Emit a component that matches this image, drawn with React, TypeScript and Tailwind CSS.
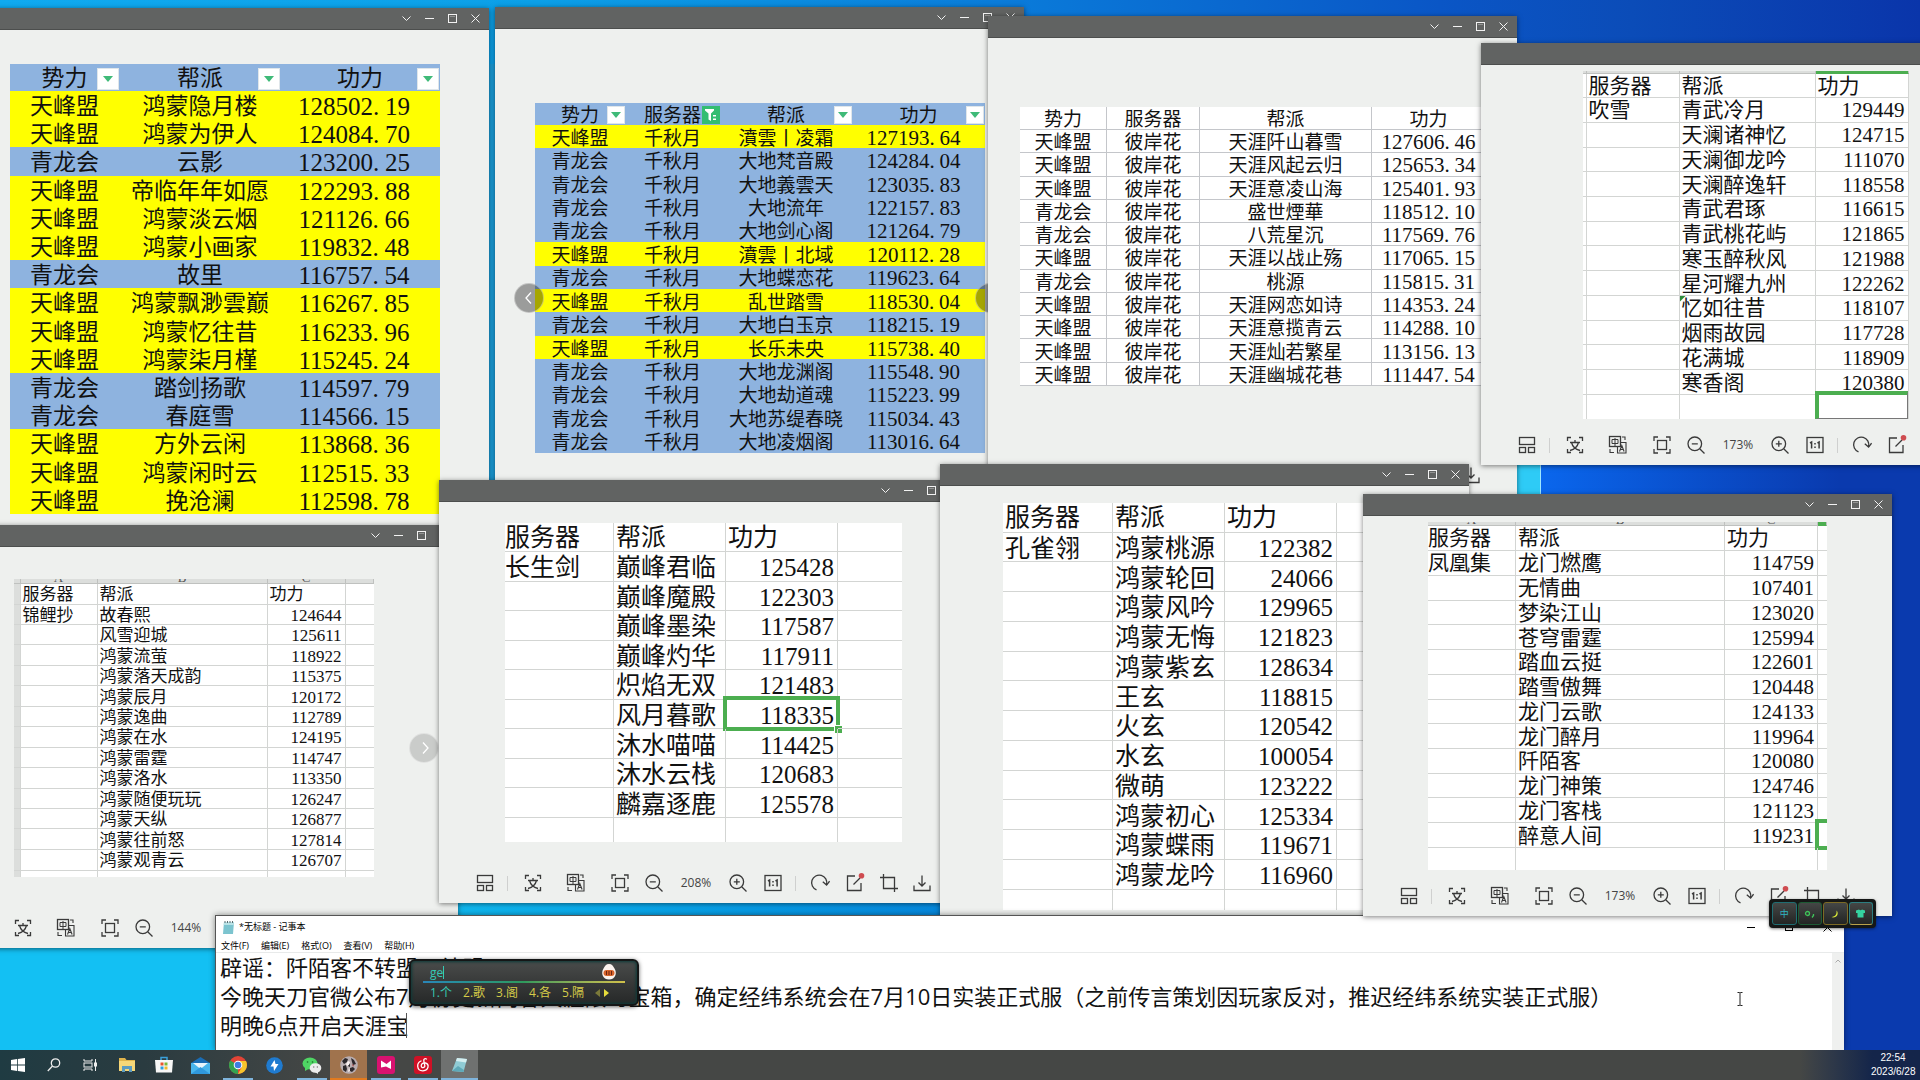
import React from "react";

type Column = {
  label: string;
  width: string;
  filter?: "arrow" | "funnel";
};

const SHEET_FONT = "font-['Liberation_Serif','Noto_Sans_CJK_SC',serif]";
const UI_FONT = "font-['Open_Sans','Noto_Sans_CJK_SC',sans-serif]";

/* ---------- viewer window chrome ---------- */

function TitleBar() {
  return (
    <div className="flex h-[22px] shrink-0 items-center justify-end border-b border-[#4c4e4d] bg-[#616362] pr-0.5 text-[#f2f2f2]">
      <button aria-label="More" className="flex w-[23px] justify-center">
        <svg width="11" height="11" viewBox="0 0 11 11" fill="none" stroke="currentColor">
          <path d="M1.5 3.5 5.5 7.5 9.5 3.5" />
        </svg>
      </button>
      <button aria-label="Minimize" className="flex w-[23px] justify-center">
        <svg width="11" height="11" viewBox="0 0 11 11" fill="none" stroke="currentColor">
          <path d="M1 5.5H10" />
        </svg>
      </button>
      <button aria-label="Maximize" className="flex w-[23px] justify-center">
        <svg width="11" height="11" viewBox="0 0 11 11" fill="none" stroke="currentColor">
          <rect x="1.5" y="1.5" width="8" height="8" />
          <path d="M3 3.5H8" opacity=".35" />
        </svg>
      </button>
      <button aria-label="Close" className="flex w-[23px] justify-center">
        <svg width="11" height="11" viewBox="0 0 11 11" fill="none" stroke="currentColor">
          <path d="M1.5 1.5 9.5 9.5M9.5 1.5 1.5 9.5" />
        </svg>
      </button>
    </div>
  );
}

function Tool({ label, width, children }: { label: string; width: string; children: React.ReactNode }) {
  return (
    <button aria-label={label} className={`flex shrink-0 justify-center ${width}`}>
      <svg width="20" height="20" viewBox="0 0 20 20" fill="none" stroke="currentColor" strokeWidth="1.3">
        {children}
      </svg>
    </button>
  );
}

function Toolbar({ zoom }: { zoom: string }) {
  return (
    <div className="flex h-10 shrink-0 items-center pl-7 text-[#3a3a3a]">
      <Tool label="Gallery" width="w-9">
        <rect x="2.5" y="2.5" width="15" height="7" />
        <rect x="2.5" y="12.5" width="6" height="5" />
        <rect x="11.5" y="12.5" width="6" height="5" />
      </Tool>
      <span className="mx-1 h-[15px] w-0.5 shrink-0 border-l border-[#cfd0cf]" />
      <Tool label="Recognize text" width="w-10">
        <path d="M2.5 6V2.5H6M14 2.5h3.5V6M17.500 14v3.500H14M6 17.500H2.500V14" />
        <path d="M5 7.500h10M10 5v2.500M13.500 7.500C12.500 11.500 9 14.500 5 15.500M6.500 7.500C7.500 11.500 11 14.500 15 15.500" />
      </Tool>
      <Tool label="Translate" width="w-[46px]">
        <rect x="1.500" y="1.500" width="11" height="10" />
        <path d="M4 4.500h6v4H4zM7 3v8" strokeWidth="1" />
        <path d="M9.500 11.500v6.500h8.500V7.500h-5.500M11.500 16.500l2.300-6 2.300 6M12.300 14.500h3M14 2h3v3M2 14v3.500h4" strokeWidth="1.1" />
      </Tool>
      <Tool label="Fit to window" width="w-[42px]">
        <path d="M2 6V2h4M14 2h4v4M18 14v4h-4M6 18H2v-4" />
        <rect x="5.500" y="5.500" width="9" height="9" />
      </Tool>
      <Tool label="Zoom out" width="w-[26px]">
        <circle cx="8.800" cy="8.800" r="6.800" />
        <path d="M13.700 13.700 18.500 18.500M5.800 8.800h6" />
      </Tool>
      <span className={`w-[58px] shrink-0 text-center text-xs text-[#444] ${UI_FONT}`}>{zoom}</span>
      <Tool label="Zoom in" width="w-[26px]">
        <circle cx="8.800" cy="8.800" r="6.800" />
        <path d="M13.700 13.700 18.500 18.500M5.800 8.800h6M8.800 5.800v6" />
      </Tool>
      <Tool label="Actual size" width="w-11">
        <rect x="2" y="2.500" width="16" height="15" />
        <path d="M5 8l1.600-1V13.500M12.500 8l1.600-1V13.500" strokeWidth="1.5" />
        <path d="M10 8v1.500M10 11.500v1.500" strokeWidth="1.5" />
      </Tool>
      <span className="h-[15px] w-0.5 shrink-0 border-l border-[#cfd0cf]" />
      <Tool label="Rotate" width="w-[46px]">
        <path d="M6.500 16.800A7.600 7.600 0 1 1 16.600 11.500" />
        <path d="M12.800 8.800 16.600 12 19.600 8.200" />
      </Tool>
      <Tool label="Edit" width="w-6">
        <path d="M10 3H2.500v14.500H16V10M8.500 11.500 15 5" />
        <circle cx="16.500" cy="2.800" r="2.800" fill="#cf4c50" stroke="none" />
      </Tool>
      <Tool label="Crop" width="w-11">
        <path d="M1 4.500h14.500V19M4.500 1v14.500H19" />
      </Tool>
      <Tool label="Save" width="w-[22px]">
        <path d="M10 2.500v10M6.500 9.500l3.500 3.500 3.500-3.500M2 12.500v5h16v-5" />
      </Tool>
    </div>
  );
}

function ImageWindow({ place, zoom, nav, children }: {
  place: string;
  zoom?: string;
  nav?: string;
  children: React.ReactNode;
}) {
  return (
    <section className={`absolute flex w-[529px] flex-col bg-[#eef0ee] shadow-[0_1px_5px_rgba(0,0,0,0.5)] ${place}`}>
      <TitleBar />
      <div className="flex min-h-0 flex-1 flex-col items-center justify-center">{children}</div>
      {zoom ? <Toolbar zoom={zoom} /> : <div className="h-10 shrink-0" />}
      {nav && (
        <div className="pointer-events-none absolute inset-x-[19px] top-[22px] bottom-0 flex items-center justify-between">
          <button aria-label="Previous" className={`flex size-[30px] items-center justify-center rounded-full border border-white/40 text-white ${nav}`}>
            <svg width="14" height="14" viewBox="0 0 14 14" fill="none" stroke="currentColor" strokeWidth="1.3">
              <path d="M9 1.500 4 7l5 5.500" />
            </svg>
          </button>
          <button aria-label="Next" className={`flex size-[30px] items-center justify-center rounded-full border border-white/40 text-white ${nav}`}>
            <svg width="14" height="14" viewBox="0 0 14 14" fill="none" stroke="currentColor" strokeWidth="1.300">
              <path d="M6 1.500 11 7l-5 5.500" />
            </svg>
          </button>
        </div>
      )}
    </section>
  );
}

/* ---------- coloured ranking tables ---------- */

function Decimal({ value, dot }: { value: string; dot: string }) {
  const [whole, part] = value.split(".");
  return (
    <>
      {whole}
      <span className={`inline-block text-left ${dot}`}>.</span>
      {part}
    </>
  );
}

function FilterButton({ kind, size, label }: { kind: "arrow" | "funnel"; size: string; label: string }) {
  return kind === "arrow" ? (
    <button aria-label={`${label} filter`} className={`absolute right-px bottom-px flex items-center justify-center border border-[#dfe6ea] bg-white ${size}`}>
      <svg width="10" height="6" viewBox="0 0 10 6">
        <path d="M0 0h10L5 6z" fill="#3fba78" />
      </svg>
    </button>
  ) : (
    <button aria-label={`${label} filter`} className={`absolute right-0 bottom-px flex items-center justify-center bg-[#33bd72] ${size}`}>
      <svg width="14" height="14" viewBox="0 0 14 14" fill="#fff">
        <path d="M1 1h9v1.500L7 5.500V13L4.500 11.500v-6L1 2.500zM9 7h3v1.500H9zM9 10.500h3V12H9z" />
      </svg>
    </button>
  );
}

function RankTable({ columns, rows, size, head, filter, dot, plain, pad, numbers }: {
  columns: Column[];
  rows: string[][];
  size: string;
  head: string;
  filter: string;
  dot: string;
  plain?: boolean;
  pad: string;
  numbers: string;
}) {
  const cell = plain ? "border-r border-b border-[#c4c6ca] last:border-r-0" : "";
  return (
    <table className={`table-fixed border-separate border-spacing-0 text-center leading-none text-[#111] ${SHEET_FONT} ${size}`}>
      <colgroup>
        {columns.map((c) => <col key={c.label} className={c.width} />)}
      </colgroup>
      <thead>
        <tr className={`${head} ${plain ? "bg-white" : "bg-[#8eb3df]"}`}>
          {columns.map((c) => (
            <th key={c.label} scope="col" className={`relative px-0 pt-0.5 pb-0 font-normal ${cell}`}>
              {c.label}
              {c.filter && <FilterButton kind={c.filter} size={filter} label={c.label} />}
            </th>
          ))}
        </tr>
      </thead>
      <tbody>
        {rows.map((r) => (
          <tr key={r[r.length - 2]} className={plain ? "bg-white" : r[0] === "天峰盟" ? "bg-[#ffff00]" : "bg-[#8eb3df]"}>
            {r.map((v, i) => (
              <td key={i} className={`whitespace-nowrap pb-0 pl-0 ${pad} ${cell} ${i === r.length - 1 ? numbers : "pr-0"}`}>
                {i === r.length - 1 ? <Decimal value={v} dot={dot} /> : v}
              </td>
            ))}
          </tr>
        ))}
      </tbody>
    </table>
  );
}

/* ---------- plain server sheets ---------- */

function ServerSheet({ server, rows, size, cols, head, pad, tail, strip, letters, gutter, cut, select, extra, mark, topMark }: {
  server: string;
  rows: [string, string][];
  size: string;
  cols: string[];
  head: string;
  pad: string;
  tail?: string;
  strip?: string;
  letters?: string[];
  gutter?: string;
  cut?: boolean;
  select?: string;
  extra?: boolean;
  mark?: string;
  topMark?: number;
}) {
  const line = "border-r border-b border-[#d3d5d3]";
  const first = cut ? "pl-0" : "pl-0.5";
  const side = gutter ? <td className={`p-0 ${line} ${gutter}`} /> : null;
  const green = "pointer-events-none absolute border-4 border-[#4cae50]";
  return (
    <table className={`table-fixed border-separate border-spacing-0 bg-white text-left leading-none text-[#111] ${SHEET_FONT} ${size}`}>
      <colgroup>
        {cols.map((c, i) => <col key={i} className={c} />)}
      </colgroup>
      <tbody>
        {strip && (
          <tr>
            {cols.map((_, i) => (
              <td key={i} className={`border-r border-b bg-[#dcdedc] p-0 ${i === topMark ? "border-r-[#bfc1bf] border-b-[#4cae50]" : "border-[#bfc1bf]"}`}>
                <div className={`flex items-end justify-center overflow-hidden text-[13px] leading-[10px] text-[#555] ${strip} ${i === topMark ? "bg-[#4cae50]" : ""}`}>
                  {letters?.[i]}
                </div>
              </td>
            ))}
          </tr>
        )}
        <tr className={head}>
          {side}
          <td className={`pt-px pr-0 pb-0 ${first} ${line}`}>服务器</td>
          <td className={`pt-px pr-0 pb-0 pl-0.5 ${line}`}>帮派</td>
          <td className={`pt-px pr-0 pb-0 pl-0.5 ${line}`}>功力</td>
          {extra && <td className="border-b border-[#d3d5d3] p-0" />}
        </tr>
        {rows.map(([name, power], i) => (
          <tr key={name}>
            {side}
            <td className={`whitespace-nowrap pr-0 pb-0 ${pad} ${first} ${line}`}>{i === 0 ? server : ""}</td>
            <td className={`relative whitespace-nowrap pr-0 pb-0 pl-0.5 ${pad} ${line}`}>
              {mark === name && <span className="absolute top-0 left-0 size-1.5 bg-[#2e8b3a] [clip-path:polygon(0_0,100%_0,0_100%)]" />}
              {name}
            </td>
            <td className={`relative pr-[3px] pb-0 pl-0 text-right ${pad} ${line}`}>
              {power}
              {select === name && (
                <span className={`${green} -inset-x-[3px] -top-1 -bottom-[3px]`}>
                  <span className="absolute -right-[6px] -bottom-[6px] size-2 border-t border-l border-white bg-[#4cae50]" />
                </span>
              )}
            </td>
            {extra && (
              <td className="relative border-b border-[#d3d5d3] p-0">
                {select === "edge" && i === rows.length - 1 && <span className={`${green} -top-1 right-0 -bottom-[3px] -left-[3px] border-r-0`} />}
              </td>
            )}
          </tr>
        ))}
        {tail && (
          <tr className={tail}>
            {gutter && <td className={`border-r border-[#d3d5d3] p-0 ${gutter}`} />}
            <td className="border-r border-[#d3d5d3] p-0" />
            <td className="border-r border-[#d3d5d3] p-0" />
            <td className="relative border-r border-[#d3d5d3] p-0">
              {select === "tail" && <span className="pointer-events-none absolute -top-1 right-0 bottom-0 -left-px border-t-4 border-r border-b border-l-4 border-[#4cae50] border-r-[#777] border-b-[#777]" />}
            </td>
            {extra && <td className="p-0" />}
          </tr>
        )}
      </tbody>
    </table>
  );
}

/* ---------- data ---------- */

const T = "天峰盟";
const Q = "青龙会";

const hongmeng: string[][] = [
  [T, "鸿蒙隐月楼", "128502.19"], [T, "鸿蒙为伊人", "124084.70"], [Q, "云影", "123200.25"],
  [T, "帝临年年如愿", "122293.88"], [T, "鸿蒙淡云烟", "121126.66"], [T, "鸿蒙小画家", "119832.48"],
  [Q, "故里", "116757.54"], [T, "鸿蒙飘渺雲巅", "116267.85"], [T, "鸿蒙忆往昔", "116233.96"],
  [T, "鸿蒙柒月槿", "115245.24"], [Q, "踏剑扬歌", "114597.79"], [Q, "春庭雪", "114566.15"],
  [T, "方外云闲", "113868.36"], [T, "鸿蒙闲时云", "112515.33"], [T, "挽沧澜", "112598.78"],
];

const S = "千秋月";
const qianqiu: string[][] = [
  [T, S, "濆雲丨凌霜", "127193.64"], [Q, S, "大地梵音殿", "124284.04"], [Q, S, "大地義雲天", "123035.83"],
  [Q, S, "大地流年", "122157.83"], [Q, S, "大地剑心阁", "121264.79"], [T, S, "濆雲丨北域", "120112.28"],
  [Q, S, "大地蝶恋花", "119623.64"], [T, S, "乱世踏雪", "118530.04"], [Q, S, "大地白玉京", "118215.19"],
  [T, S, "长乐未央", "115738.40"], [Q, S, "大地龙渊阁", "115548.90"], [Q, S, "大地劫道魂", "115223.99"],
  [Q, S, "大地苏缇春晓", "115034.43"], [Q, S, "大地凌烟阁", "113016.64"],
];

const B = "彼岸花";
const bian: string[][] = [
  [T, B, "天涯阡山暮雪", "127606.46"], [T, B, "天涯风起云归", "125653.34"], [T, B, "天涯意凌山海", "125401.93"],
  [Q, B, "盛世煙華", "118512.10"], [Q, B, "八荒星沉", "117569.76"], [T, B, "天涯以战止殇", "117065.15"],
  [Q, B, "桃源", "115815.31"], [T, B, "天涯网恋如诗", "114353.24"], [T, B, "天涯意揽青云", "114288.10"],
  [T, B, "天涯灿若繁星", "113156.13"], [T, B, "天涯幽城花巷", "111447.54"],
];

const chuixue: [string, string][] = [
  ["青武冷月", "129449"], ["天澜诸神忆", "124715"], ["天澜御龙吟", "111070"], ["天澜醉逸轩", "118558"],
  ["青武君琢", "116615"], ["青武桃花屿", "121865"], ["寒玉醉秋风", "121988"], ["星河耀九州", "122262"],
  ["忆如往昔", "118107"], ["烟雨故园", "117728"], ["花满城", "118909"], ["寒香阁", "120380"],
];

const jinli: [string, string][] = [
  ["故春熙", "124644"], ["风雪迎城", "125611"], ["鸿蒙流萤", "118922"], ["鸿蒙落天成韵", "115375"],
  ["鸿蒙辰月", "120172"], ["鸿蒙逸曲", "112789"], ["鸿蒙在水", "124195"], ["鸿蒙雷霆", "114747"],
  ["鸿蒙洛水", "113350"], ["鸿蒙随便玩玩", "126247"], ["鸿蒙天纵", "126877"], ["鸿蒙往前怒", "127814"],
  ["鸿蒙观青云", "126707"],
];

const changsheng: [string, string][] = [
  ["巅峰君临", "125428"], ["巅峰魔殿", "122303"], ["巅峰墨染", "117587"], ["巅峰灼华", "117911"],
  ["炽焰无双", "121483"], ["风月暮歌", "118335"], ["沐水喵喵", "114425"], ["沐水云栈", "120683"],
  ["麟嘉逐鹿", "125578"],
];

const kongque: [string, string][] = [
  ["鸿蒙桃源", "122382"], ["鸿蒙轮回", "24066"], ["鸿蒙风吟", "129965"], ["鸿蒙无悔", "121823"],
  ["鸿蒙紫玄", "128634"], ["王玄", "118815"], ["火玄", "120542"], ["水玄", "100054"],
  ["微萌", "123222"], ["鸿蒙初心", "125334"], ["鸿蒙蝶雨", "119671"], ["鸿蒙龙吟", "116960"],
];

const fenghuang: [string, string][] = [
  ["龙门燃鹰", "114759"], ["无情曲", "107401"], ["梦染江山", "123020"], ["苍穹雷霆", "125994"],
  ["踏血云挺", "122601"], ["踏雪傲舞", "120448"], ["龙门云歌", "124133"], ["龙门醉月", "119964"],
  ["阡陌客", "120080"], ["龙门神策", "124746"], ["龙门客栈", "121123"], ["醉意人间", "119231"],
];

const note = [
  "辟谣：阡陌客不转盟，结盟",
  "今晚天刀官微公布7月份更新内容天涯限时宝箱，确定经纬系统会在7月10日实装正式服（之前传言策划因玩家反对，推迟经纬系统实装正式服）",
  "明晚6点开启天涯宝",
].join("\n");

/* ---------- notepad and input method ---------- */

function NotepadIcon() {
  return (
    <svg width="13" height="15" viewBox="0 0 13 15">
      <path d="M2 2h10l-1 12H1z" fill="#7cc4cf" />
      <path d="M2 2h10l-.3 3H1.700z" fill="#b9e2e6" />
      <path d="M3 1v2M5.500 1v2M8 1v2M10.500 1v2" stroke="#5a6c70" />
    </svg>
  );
}

function Notepad() {
  return (
    <section className={`absolute top-[915px] right-[76px] bottom-0 left-[215px] flex flex-col border-t border-l border-[#555] bg-white shadow-[0_0_6px_rgba(0,0,0,0.45)] ${UI_FONT}`}>
      <header className="flex h-[22px] shrink-0 items-center gap-1 pl-1.5 text-[9px] text-black">
        <NotepadIcon />
        <h1 className="flex-1">*无标题 - 记事本</h1>
        <button aria-label="Minimize" className="flex w-[34px] justify-center"><span className="block h-px w-2 bg-black" /></button>
        <button aria-label="Maximize" className="flex w-[34px] justify-center"><span className="block size-2 border border-black" /></button>
        <button aria-label="Close" className="flex w-[34px] justify-center">
          <svg width="9" height="9" viewBox="0 0 9 9" stroke="#000"><path d="M.5.500l8 8M8.500.500l-8 8" /></svg>
        </button>
      </header>
      <nav className="flex h-[15px] shrink-0 items-center gap-3 border-b border-[#e8eaea] pl-[5px] text-[9px] leading-none text-black">
        <button>文件(F)</button>
        <button>编辑(E)</button>
        <button>格式(O)</button>
        <button>查看(V)</button>
        <button>帮助(H)</button>
      </nav>
      <div className="relative flex min-h-0 flex-1">
        <textarea
          aria-label="Document text"
          defaultValue={note}
          spellCheck={false}
          className="min-w-0 flex-1 resize-none overflow-hidden whitespace-pre bg-white pt-0 pl-1 text-[22px] leading-[29px] text-[#111] outline-none"
        />
        <span className="absolute top-[60px] left-[190px] h-[25px] w-px bg-[#555]" />
        <div className="flex w-3 shrink-0 justify-center bg-[#eff0ef] pt-1.5">
          <svg width="6" height="4" viewBox="0 0 6 4" fill="none" stroke="#aaa"><path d="M.5 3.500 3 1l2.500 2.500" /></svg>
        </div>
      </div>
    </section>
  );
}

function InputPanel() {
  return (
    <div className={`absolute top-[959px] left-[409px] flex h-[47px] w-[230px] flex-col rounded-md border-2 border-[#141616] bg-linear-to-b from-[#4a4c4b] to-[#262828] px-3 pt-0.5 shadow-[inset_0_0_3px_1px_#0b3a38,0_1px_4px_rgba(0,0,0,0.6)] ${UI_FONT}`}>
      <div className="flex h-[18px] items-center pl-[7px] text-xs text-[#35c9b4]">
        <span className="border-r border-[#35c9b4] leading-[13px]">ge</span>
        <svg className="mr-2 ml-auto" width="16" height="16" viewBox="0 0 16 16">
          <path d="M8 0c3 0 4 2 5.500 4.500C15 7 15 9 14.500 11c-1 3-3.500 4.500-6.500 4.500S2.500 14 1.500 11C1 9 1 7 2.500 4.500 4 2 5 0 8 0z" fill="#fbf3ee" />
          <rect x="2.500" y="6" width="11" height="6" rx="3" fill="#d8642b" />
          <path d="M5.500 7v4M8 7v4M10.500 7v4" stroke="#6c2410" />
        </svg>
      </div>
      <div className="h-0.5 shrink-0 bg-linear-to-r from-[#2a86b8] via-[#2f9a5c] to-[#cfc04a]" />
      <ol className="flex h-[19px] items-center gap-[11px] pl-[7px] text-xs leading-none text-[#d6cc49]">
        <li className="text-[#35c9b4]">1.个</li>
        <li>2.歌</li>
        <li>3.阁</li>
        <li>4.各</li>
        <li>5.隔</li>
        <li>
          <svg width="14" height="8" viewBox="0 0 14 8"><path d="M5 0v8L0 4z" fill="#7c7a3a" /><path d="M9 0v8l5-4z" fill="#e6dc3c" /></svg>
        </li>
      </ol>
    </div>
  );
}

function InputStatus() {
  const key = "flex h-[23px] flex-1 items-center justify-center rounded-[3px] border bg-linear-to-b from-[#454746] to-[#232524]";
  return (
    <div className="absolute top-[899px] right-11 flex w-[107px] gap-px rounded-[4px] bg-[#151716] p-[3px] shadow-[0_1px_3px_rgba(0,0,0,0.5)]">
      <button className={`${key} border-[#1f6d72] text-[9px] text-[#30b4c0] ${UI_FONT}`}>中</button>
      <button aria-label="Punctuation" className={`${key} border-[#1d5a34]`}>
        <svg width="12" height="10" viewBox="0 0 12 10" fill="none" stroke="#3fc45a" strokeWidth="1.300"><circle cx="3.500" cy="4.500" r="2" /><path d="M9.500 5v1.500l-1.500 2" /></svg>
      </button>
      <button aria-label="Night mode" className={`${key} border-[#7c6a25]`}>
        <svg width="10" height="10" viewBox="0 0 10 10"><path d="M6.500 1.500C9 4 7.500 8.500 3 8.500 2.500 8.500 2 8.300 1.500 8 5.500 7.500 7 5 6.500 1.500z" fill="#d9e83a" /></svg>
      </button>
      <button aria-label="Skin" className={`${key} border-[#2c7d80] border-b-[#b9a14a]`}>
        <svg width="11" height="9" viewBox="0 0 11 9"><path d="M1 1.500 4 .500c.5 1 2.500 1 3 0l3 1v2.500H8.500V8.500h-6V4H1z" fill="#35d3a0" /></svg>
      </button>
    </div>
  );
}

/* ---------- taskbar ---------- */

function TaskButton({ label, width = "w-[37px]", state = "", line = "", children }: {
  label: string;
  width?: string;
  state?: string;
  line?: string;
  children: React.ReactNode;
}) {
  return (
    <button aria-label={label} className={`relative flex h-full shrink-0 items-center justify-center ${width} ${state}`}>
      {children}
      {line && <span className={`absolute bottom-0 h-0.5 ${line}`} />}
    </button>
  );
}

function Taskbar() {
  return (
    <footer className="z-10 flex h-[30px] shrink-0 items-center justify-between bg-[#454745]">
      <div className="flex h-full flex-1 bg-linear-to-r from-[#1f3b42] via-[#2a3b40] via-8% to-[#454745] to-18%">
        <TaskButton label="Start" width="w-9">
          <svg width="14" height="14" viewBox="0 0 14 14" fill="#fff"><path d="M0 2l6-.9v5.500H0zM6.800 1 14 0v6.600H6.800zM0 7.400h6v5.500L0 12zM6.800 7.400H14V14l-7.200-1z" /></svg>
        </TaskButton>
        <TaskButton label="Search" width="w-9">
          <svg width="14" height="14" viewBox="0 0 14 14" fill="none" stroke="#eee" strokeWidth="1.300"><circle cx="8.500" cy="5" r="4.200" /><path d="M5.500 8 .8 13" /></svg>
        </TaskButton>
        <TaskButton label="Task view" width="w-9">
          <svg width="14" height="14" viewBox="0 0 14 14" fill="none" stroke="#eee"><path d="M1 1v2h8V1M1 13v-2h8v2M12.500 1v12" /><rect x="1" y="5" width="8" height="4" /><rect x="11.500" y="5" width="2" height="3" fill="#eee" /></svg>
        </TaskButton>
        <TaskButton label="File Explorer">
          <svg width="18" height="16" viewBox="0 0 18 16"><path d="M1 1h6l1.500 2H17v11H1z" fill="#e0b44c" /><path d="M1 4h16v10H1z" fill="#f6d778" /><path d="M4 15V9h10v6h-3v-3H7v3z" fill="#5b9bc0" /></svg>
        </TaskButton>
        <TaskButton label="Store">
          <svg width="18" height="18" viewBox="0 0 18 18"><path d="M6 5V1.500h6V5" fill="none" stroke="#3aa0da" strokeWidth="1.500" /><path d="M0 4h18l-1 12.500H1z" fill="#f7f7f7" /><path d="M5.500 6.500h3v3h-3z" fill="#e8552d" /><path d="M9.500 6.500h3v3h-3z" fill="#7cb83c" /><path d="M5.500 10.500h3v3h-3z" fill="#2f9fe0" /><path d="M9.500 10.500h3v3h-3z" fill="#f2b92c" /></svg>
        </TaskButton>
        <TaskButton label="Mail">
          <svg width="19" height="17" viewBox="0 0 19 17"><path d="M0 6 9.500 0 19 6z" fill="#1a6cb4" /><path d="M0 6h19v11H0z" fill="#49b5ec" /><path d="M2 6h15l-7.500 6z" fill="#e9f5fc" /><path d="M0 17 9.500 10 19 17z" fill="#2f98dc" /></svg>
        </TaskButton>
        <TaskButton label="Chrome" line="w-[30px] bg-[#7fb4dc]">
          <svg width="18" height="18" viewBox="0 0 18 18"><circle cx="9" cy="9" r="9" fill="#e24436" /><path d="M9 9 1.200 4.500A9 9 0 0 0 9 18z" fill="#34a350" /><path d="M9 5h8A9 9 0 0 1 9 18l3.800-7z" fill="#f7c52c" /><circle cx="9" cy="9" r="4.300" fill="#fff" /><circle cx="9" cy="9" r="3.300" fill="#3f7de0" /></svg>
        </TaskButton>
        <TaskButton label="Thunder">
          <svg width="17" height="17" viewBox="0 0 17 17"><circle cx="8.500" cy="8.500" r="8.300" fill="#1f7bd0" /><path d="M8.500 3 4.500 9.500h3L8 14l4.500-7h-3z" fill="#fff" /></svg>
        </TaskButton>
        <TaskButton label="WeChat" line="w-[30px] bg-[#7fb4dc]">
          <svg width="20" height="17" viewBox="0 0 20 17"><ellipse cx="8" cy="6.500" rx="7.500" ry="6" fill="#4fd564" /><path d="M3 10v4l3.500-2z" fill="#4fd564" /><ellipse cx="13.500" cy="11" rx="5.800" ry="4.800" fill="#ececec" /><path d="M16 14v3l-3-2z" fill="#ececec" /><path d="M5.500 5h.1M10.500 5h.1" stroke="#1f6a2c" strokeWidth="1.600" strokeLinecap="round" /><path d="M11.700 10h.1M15.300 10h.1" stroke="#777" strokeWidth="1.300" strokeLinecap="round" /></svg>
        </TaskButton>
        <TaskButton label="Game" state="bg-[#a0734d]" line="w-full bg-[#e27a1e]">
          <svg width="18" height="18" viewBox="0 0 18 18"><circle cx="9" cy="9" r="8.800" fill="#b8adb0" /><path d="M2 5l3-3 3 1-1 3-3 2zM3 10l3-1 1 4-1 3-3-2zM11 2l3 2 2 4-3 1-1-3zM10 12l3-1 2 2-3 3-2-1zM8 7l2 1v3l-2-1z" fill="#2c282c" /><path d="M6 8l2-3 2 1-1 3-2 1zM9 11l1 4-2 1z" fill="#f8f0f0" /><path d="M12 8l2 1-1 2z" fill="#a04a4a" /></svg>
        </TaskButton>
        <TaskButton label="Video" line="w-[30px] bg-[#7fb4dc]">
          <svg width="18" height="18" viewBox="0 0 18 18"><rect width="18" height="18" rx="3" fill="#d81270" /><path d="M4 4.500 9.500 8 14 4.500V13L9 10.500 4 11.500z" fill="#fff" /></svg>
        </TaskButton>
        <TaskButton label="Music" line="w-[30px] bg-[#7fb4dc]">
          <svg width="18" height="18" viewBox="0 0 18 18"><rect width="18" height="18" rx="3" fill="#cf1126" /><path d="M12.500 3c-1.800-.8-3 .2-2.700 2l1 4.700c.2 2.300-3.600 2.600-3.600.1C7.200 7.500 9.500 6.600 11.500 7c4 1 3.500 7.500-2.500 7.800C2.500 15 2.200 7 7 5" fill="none" stroke="#fff" strokeWidth="1.300" strokeLinecap="round" /></svg>
        </TaskButton>
        <TaskButton label="Notepad" state="bg-[#6f7170]" line="w-full bg-[#7fb4dc]">
          <svg width="17" height="17" viewBox="0 0 17 17"><path d="M6 1l10 1-3.500 13L1 14z" fill="#8fcbd4" /><path d="M6 1l10 1-1 3.500L5 4z" fill="#d5eef0" /><path d="M1 14l6-5 6 4-.5 2z" fill="#5ea9b8" /></svg>
        </TaskButton>
      </div>
      <div className="flex h-full w-[120px] flex-col items-end justify-center bg-linear-to-r from-[#454745] to-[#14254a] to-60% pr-[5px] text-[10px] leading-[14px] text-white font-['Liberation_Sans',sans-serif]">
        <time className="w-11 text-center">22:54</time>
        <time className="w-11 text-center">2023/6/28</time>
      </div>
    </footer>
  );
}

/* ---------- desktop ---------- */

export default function App() {
  return (
    <div className="flex h-screen w-full flex-col overflow-hidden bg-[#0b3fb2]">
      <main className="relative min-h-0 flex-1 overflow-hidden bg-linear-to-r from-[#13c0f3] from-20% via-[#0a78d8] via-58% to-[#0a3aae] to-95%">
        <div className="absolute inset-x-0 top-0 h-16 bg-[linear-gradient(90deg,#10aaf0_0%,#0ca0e8_28%,#0a7cda_52%,#0a56c6_75%,#0b4cb8_85%,#0a35aa_100%)]" />
        <div className="absolute top-16 left-0 h-[420px] w-[520px] bg-[#1b9fdc]" />
        <div className="absolute top-[455px] right-0 h-10 w-[403px] bg-linear-to-r from-[#0a6af2] to-[#0a3aae] to-80%" />
        <div className="absolute top-[455px] right-[379px] h-10 w-6 border-r border-[#9fe8ff] bg-[#2ecbf6]" />

        <ImageWindow place="-left-[40px] top-2 h-[580px]">
          <RankTable
            size="w-[430px] h-[450px] text-[23px]"
            head="h-[27px]"
            filter="size-[22px]"
            dot="w-3"
            pad="pt-[3px]"
            numbers="pr-3 text-[25px] leading-[23px]"
            columns={[
              { label: "势力", width: "w-[110px]", filter: "arrow" },
              { label: "帮派", width: "w-[161px]", filter: "arrow" },
              { label: "功力", width: "w-[159px]", filter: "arrow" },
            ]}
            rows={hongmeng}
          />
        </ImageWindow>

        <ImageWindow place="left-[495px] top-[7px] h-[560px]" nav="bg-black/35">
          <RankTable
            size="w-[450px] h-[350px] text-[19px]"
            head="h-[22px]"
            filter="size-[18px]"
            dot="w-2.5"
            pad="pt-[3px]"
            numbers="pr-2.5 text-[21px] leading-[19px]"
            columns={[
              { label: "势力", width: "w-[91px]", filter: "arrow" },
              { label: "服务器", width: "w-[94px]", filter: "funnel" },
              { label: "帮派", width: "w-[133px]", filter: "arrow" },
              { label: "功力", width: "w-[132px]", filter: "arrow" },
            ]}
            rows={qianqiu}
          />
        </ImageWindow>

        <ImageWindow place="left-[988px] top-4 h-[479px]" zoom="125%">
          <RankTable
            plain
            size="w-[465px] h-[279px] text-[19px]"
            head="h-[23px]"
            filter="size-[18px]"
            dot="w-2.5"
            pad="pt-[3px]"
            numbers="pr-0 text-[21px] leading-[19px]"
            columns={[
              { label: "势力", width: "w-[87px]" },
              { label: "服务器", width: "w-[93px]" },
              { label: "帮派", width: "w-[172px]" },
              { label: "功力", width: "w-[113px]" },
            ]}
            rows={bian}
          />
        </ImageWindow>

        <ImageWindow place="left-[1481px] top-[43px] h-[422px]" zoom="173%">
          <ServerSheet
            server="吹雪"
            rows={chuixue}
            size="w-[326px] h-[348px] text-[21px]"
            cols={["w-1", "w-[93px]", "w-[136px]", "w-[93px]"]}
            strip="h-0.5"
            topMark={3}
            head="h-[24px]"
            pad="pt-0.5"
            tail="h-[24px]"
            gutter="bg-white"
            select="tail"
            mark="忆如往昔"
          />
        </ImageWindow>

        <ImageWindow place="-left-[71px] top-[525px] h-[423px]" zoom="144%" nav="bg-black/15">
          <ServerSheet
            server="锦鲤抄"
            rows={jinli}
            size="w-[360px] h-[298px] text-[17px]"
            cols={["w-[7px]", "w-[77px]", "w-[170px]", "w-[78px]", "w-[28px]"]}
            strip="h-1"
            letters={["", "A", "B", "C", ""]}
            head="h-[21px]"
            pad="pt-0.5"
            tail="h-[6px]"
            gutter="bg-[#dcdedc]"
            extra
          />
        </ImageWindow>

        <ImageWindow place="left-[439px] top-[480px] h-[423px]" zoom="208%">
          <ServerSheet
            server="长生剑"
            rows={changsheng}
            size="w-[397px] h-[319px] text-[25px]"
            cols={["w-[109px]", "w-[112px]", "w-[112px]", "w-[64px]"]}
            head="h-[29px]"
            pad="pt-[3px]"
            tail="h-[24px]"
            cut
            select="风月暮歌"
            extra
          />
        </ImageWindow>

        <ImageWindow place="left-[940px] top-[464px] h-[502px]">
          <ServerSheet
            server="孔雀翎"
            rows={kongque}
            size="w-[403px] h-[407px] text-[25px]"
            cols={["w-[110px]", "w-[112px]", "w-[112px]", "w-[69px]"]}
            head="h-[30px]"
            pad="pt-[3px]"
            tail="h-[20px]"
            extra
          />
        </ImageWindow>

        <Notepad />

        <ImageWindow place="left-[1363px] top-[494px] h-[422px]" zoom="173%">
          <ServerSheet
            server="凤凰集"
            rows={fenghuang}
            size="w-[399px] h-[348px] text-[21px]"
            cols={["w-[88px]", "w-[209px]", "w-[93px]", "w-[9px]"]}
            strip="h-[3px]"
            topMark={3}
            letters={["A", "B", "C", ""]}
            head="h-[25px]"
            pad="pt-0.5"
            tail="h-[22px]"
            cut
            select="edge"
            extra
          />
        </ImageWindow>

        <InputPanel />
        <InputStatus />
        <svg className="absolute top-[992px] left-[1736px]" width="8" height="14" viewBox="0 0 8 14" fill="none" stroke="#222">
          <path d="M1.500.500h2l.5.500.5-.5h2M4 1v12M1.500 13.500h2l.5-.5.500.500h2" />
        </svg>
      </main>
      <Taskbar />
    </div>
  );
}
